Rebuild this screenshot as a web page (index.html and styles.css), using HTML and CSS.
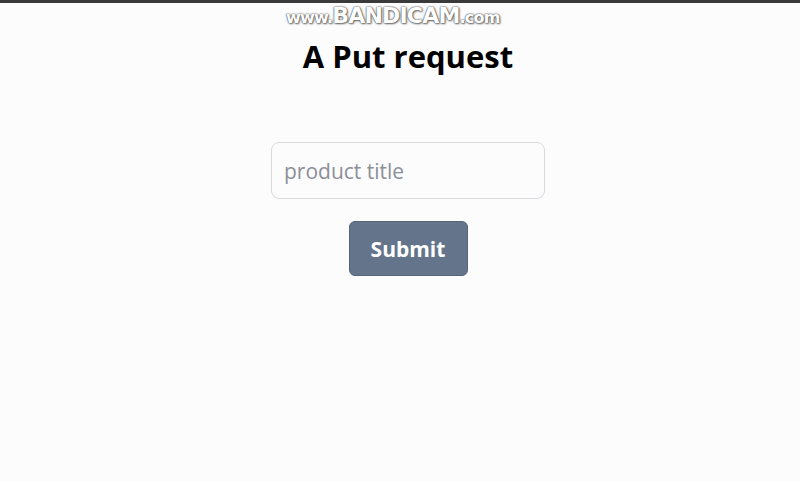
FILE: index.html
```html
<!DOCTYPE html>
<html>
<head>
    <title>A Put request</title>
    <link rel="stylesheet" href="styles.css">
</head>
<body>
    <div class="rec-bar"></div>
    <div class="watermark">www.<span class="big">BANDICAM</span>.com</div>
    <div class="page">
        <h1>A Put request</h1>
        <form class="put-form" onsubmit="return false">
            <input type="text" class="title-input" placeholder="product title">
            <button type="submit" class="btn-submit">Submit</button>
        </form>
    </div>
</body>
</html>
```

FILE: styles.css
```css
body {
    margin: 0;
    background-color: #fdfcfd;
    font-family: "Open Sans", "Noto Sans", sans-serif;
}
.rec-bar {
    height: 3px;
    background: #3a3a3a;
}
.watermark {
    position: absolute;
    top: 3px;
    left: 286px;
    font-family: "DejaVu Sans", sans-serif;
    font-size: 16px;
    font-weight: bold;
    color: #ffffff;
    letter-spacing: -0.8px;
    text-shadow: 0 0 1px #555, 0 0 2px #555, 1px 1px 2px #777;
}
.watermark .big {
    font-size: 22px;
}
.page {
    padding-left: 16px;
    display: flex;
    flex-direction: column;
    align-items: center;
}
h1 {
    margin: 32px 0 0;
    font-size: 31px;
    font-weight: bold;
    color: #000;
    line-height: 42px;
}
.put-form {
    margin-top: 65px;
    display: flex;
    flex-direction: column;
    align-items: center;
    gap: 22px;
}
.title-input {
    box-sizing: border-box;
    width: 274px;
    height: 57px;
    padding: 0 12px;
    border: 1px solid #d9d9de;
    border-radius: 8px;
    background: #fdfcfd;
    font-family: "Open Sans", "Noto Sans", sans-serif;
    font-size: 21px;
    color: #333;
    outline: none;
}
.title-input::placeholder {
    color: #8b8f98;
}
.btn-submit {
    width: 119px;
    height: 55px;
    border: 1px solid #56657c;
    border-radius: 6px;
    background-color: #64748b;
    color: #fff;
    font-family: "Open Sans", "Noto Sans", sans-serif;
    font-size: 21px;
    font-weight: bold;
    cursor: pointer;
}
```
